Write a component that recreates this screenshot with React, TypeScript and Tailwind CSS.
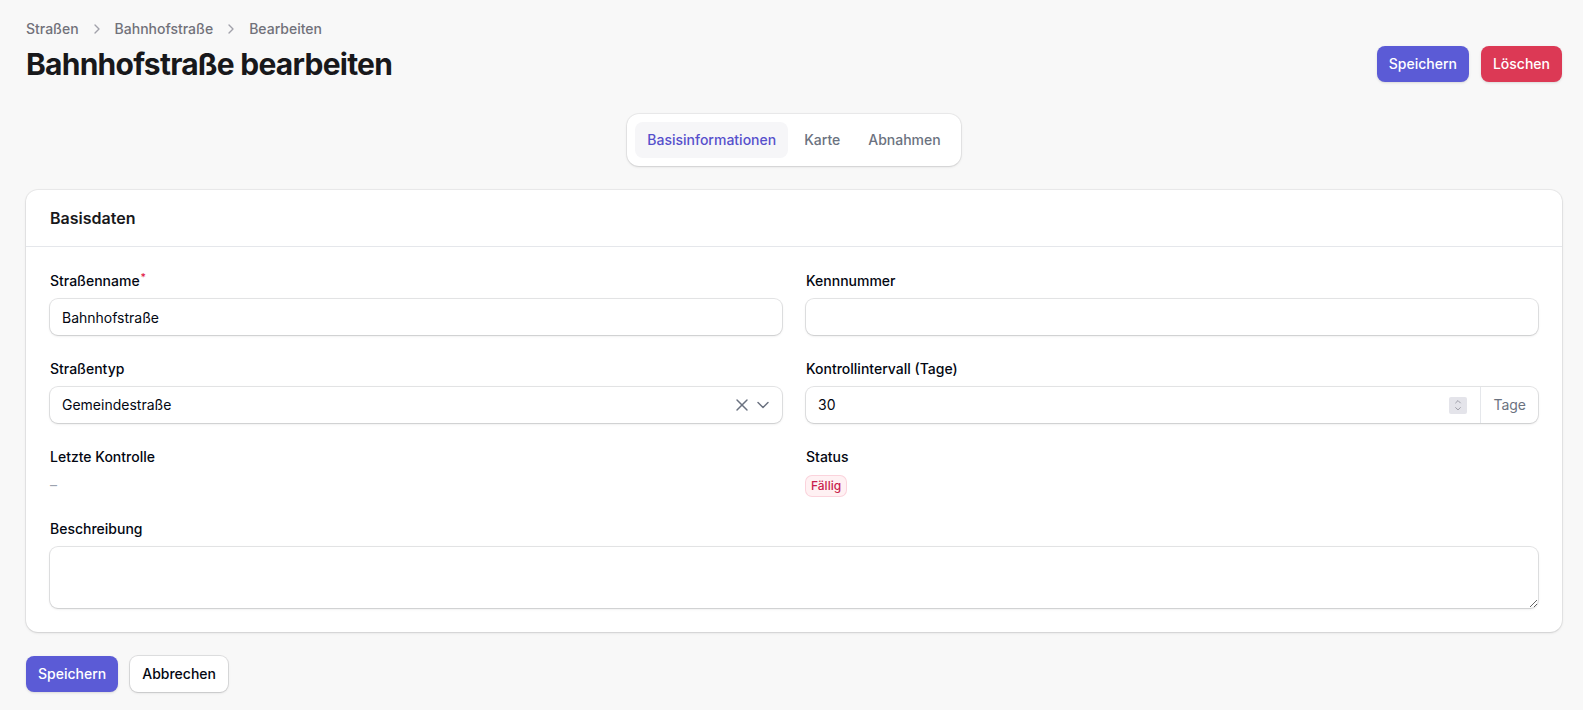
import { ChevronDown, ChevronRight, ChevronUp, X } from "lucide-react";

function Field({
    label,
    required,
    children,
    className = "",
}: {
    label: string;
    required?: boolean;
    children: React.ReactNode;
    className?: string;
}) {
    return (
        <div className={"flex flex-col gap-y-2 " + className}>
            <label className="text-sm leading-5 font-medium text-gray-950">
                {label}
                {required && <sup className="ml-[1px] text-[#e11d48] font-medium">*</sup>}
            </label>
            {children}
        </div>
    );
}

export default function App() {
    const crumbs = ["Straßen", "Bahnhofstraße", "Bearbeiten"];
    const tabs = ["Basisinformationen", "Karte", "Abnahmen"];

    return (
        <div className="min-h-screen bg-[#f8f8f8] pl-[26px] pr-[21px] pt-[19px] pb-[18px] font-['Inter',sans-serif] text-gray-950">
            {/* page header */}
            <div className="flex items-end justify-between">
                <div className="flex flex-col gap-y-[7px]">
                    <nav className="flex items-center gap-x-[10px] text-sm leading-5 font-medium text-[#71717a]">
                        {crumbs.map((c, i) => (
                            <div key={c} className="flex items-center gap-x-[10px]">
                                {i > 0 && <ChevronRight size={16} strokeWidth={2} className="text-[#a1a1aa]" />}
                                <span>{c}</span>
                            </div>
                        ))}
                    </nav>
                    <h1 className="text-3xl leading-9 font-bold tracking-tight text-[#18181b]">
                        Bahnhofstraße bearbeiten
                    </h1>
                </div>
                <div className="flex items-center gap-3">
                    <button className="h-9 px-3 rounded-lg bg-[#5b5bd6] text-sm font-medium text-white shadow-sm">
                        Speichern
                    </button>
                    <button className="h-9 px-3 rounded-lg bg-[#dc3955] text-sm font-medium text-white shadow-sm">
                        Löschen
                    </button>
                </div>
            </div>

            {/* tabs */}
            <div className="mt-8 flex justify-center">
                <nav className="flex gap-x-1 rounded-xl bg-white p-2 shadow-sm ring-1 ring-gray-950/5">
                    {tabs.map((t, i) => (
                        <button
                            key={t}
                            className={
                                "h-9 px-3 rounded-lg text-sm font-medium " +
                                (i === 0 ? "bg-[#f6f6f8] text-[#5650cc]" : "text-[#6b7280]")
                            }
                        >
                            {t}
                        </button>
                    ))}
                </nav>
            </div>

            {/* form card */}
            <section className="mt-6 rounded-xl bg-white shadow-sm ring-1 ring-gray-950/5">
                <div className="px-6 py-4 border-b border-gray-200">
                    <h3 className="text-base leading-6 font-semibold text-[#18181b]">Basisdaten</h3>
                </div>
                <div className="p-6 grid grid-cols-2 gap-6">
                    <Field label="Straßenname" required>
                        <input
                            className="h-9 w-full rounded-lg bg-white px-3 text-sm text-gray-950 shadow-sm ring-1 ring-gray-950/10 outline-none"
                            defaultValue="Bahnhofstraße"
                        />
                    </Field>
                    <Field label="Kennnummer">
                        <input className="h-9 w-full rounded-lg bg-white px-3 text-sm shadow-sm ring-1 ring-gray-950/10 outline-none" />
                    </Field>

                    <Field label="Straßentyp">
                        <div className="h-9 flex items-center rounded-lg bg-white pl-3 pr-[9px] shadow-sm ring-1 ring-gray-950/10">
                            <span className="flex-1 text-sm text-gray-950">Gemeindestraße</span>
                            <div className="flex items-center gap-[1px] text-[#6b7280]">
                                <X size={20} strokeWidth={1.75} />
                                <ChevronDown size={20} strokeWidth={1.75} />
                            </div>
                        </div>
                    </Field>
                    <Field label="Kontrollintervall (Tage)">
                        <div className="h-9 flex items-stretch rounded-lg bg-white shadow-sm ring-1 ring-gray-950/10">
                            <div className="flex-1 flex items-center pl-3 pr-[13px]">
                                <span className="flex-1 text-sm text-gray-950">30</span>
                                <span className="flex h-[17px] w-[18px] shrink-0 flex-col items-center justify-center rounded-[2px] bg-[#e4e4ea] text-[#8a8a96]">
                                    <ChevronUp size={10} strokeWidth={2} className="-mb-[1px]" />
                                    <ChevronDown size={10} strokeWidth={2} className="-mt-[1px]" />
                                </span>
                            </div>
                            <div className="flex items-center border-l border-gray-200 px-3 text-sm text-[#6b7280]">
                                Tage
                            </div>
                        </div>
                    </Field>

                    <Field label="Letzte Kontrolle">
                        <div className="h-5 text-sm leading-5 text-[#9ca3af]">–</div>
                    </Field>
                    <Field label="Status">
                        <div className="h-5 flex items-center">
                            <span className="mt-[2px] inline-flex h-5 items-center rounded-md bg-[#fff1f3] px-[5px] text-xs font-medium text-[#c81e4e] ring-1 ring-[#fbd3dc]">
                                Fällig
                            </span>
                        </div>
                    </Field>

                    <Field label="Beschreibung" className="col-span-2">
                        <textarea className="block h-[61px] w-full rounded-lg bg-white px-3 py-2 text-sm shadow-sm ring-1 ring-gray-950/10 outline-none" />
                    </Field>
                </div>
            </section>

            {/* form actions */}
            <div className="mt-6 flex items-center gap-3">
                <button className="h-9 px-3 rounded-lg bg-[#5b5bd6] text-sm font-medium text-white shadow-sm">
                    Speichern
                </button>
                <button className="h-9 px-3 rounded-lg bg-white text-sm font-medium text-gray-950 shadow-sm ring-1 ring-gray-950/10">
                    Abbrechen
                </button>
            </div>
        </div>
    );
}
